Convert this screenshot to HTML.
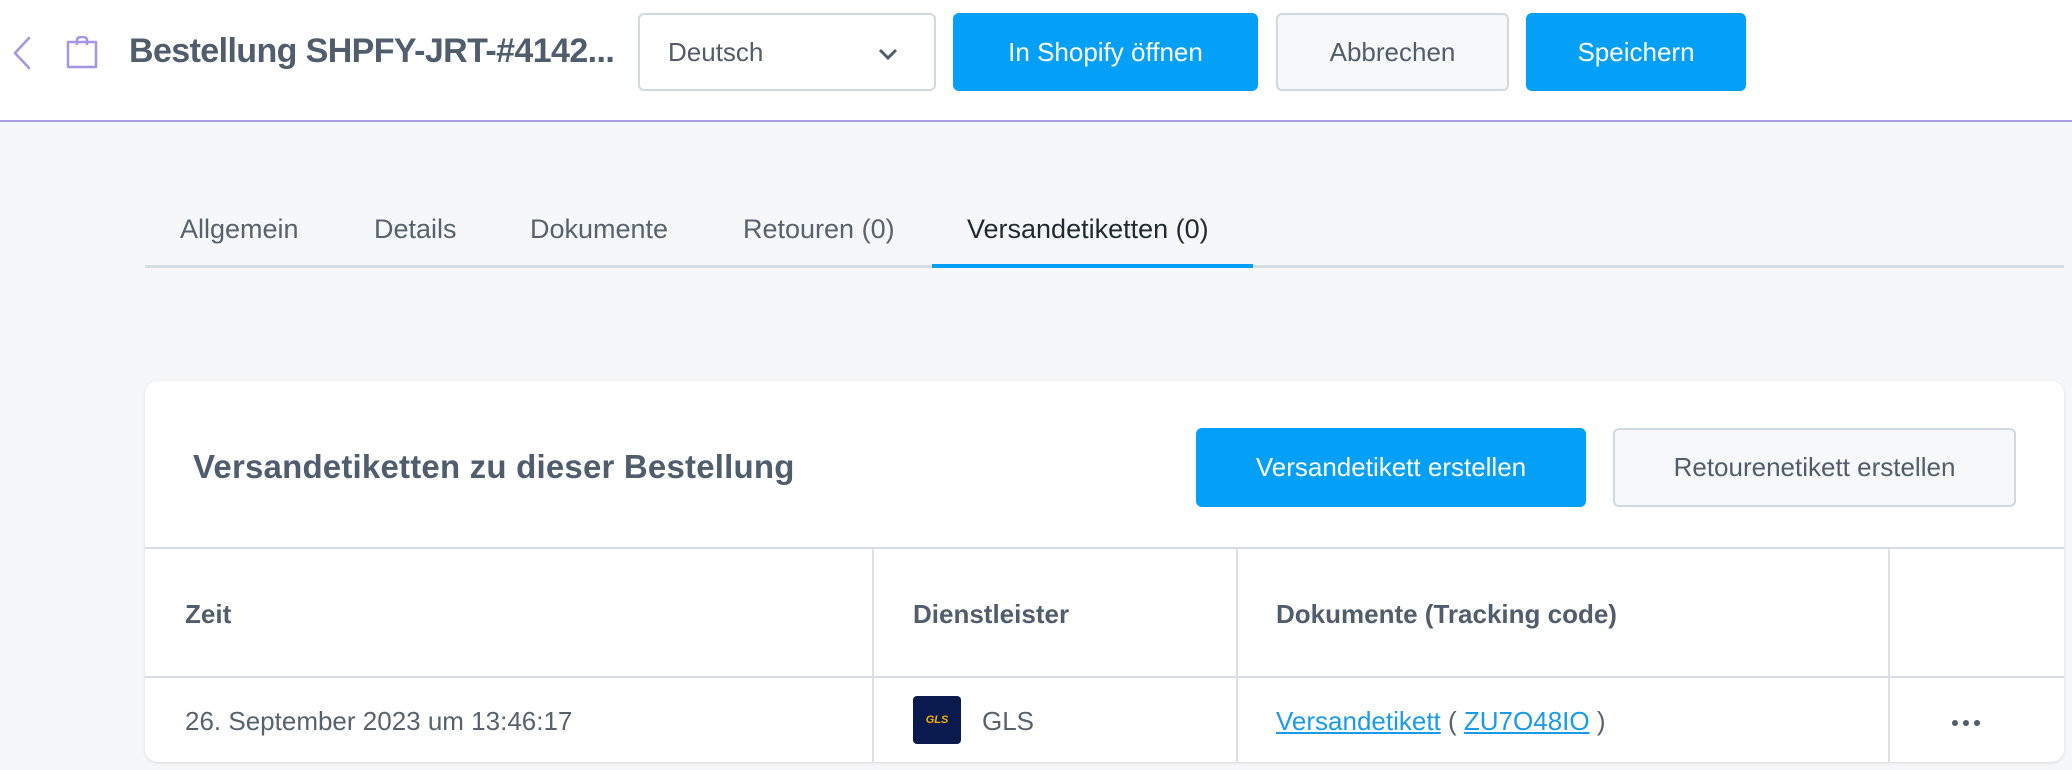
<!DOCTYPE html>
<html><head><meta charset="utf-8"><style>
*{box-sizing:border-box;margin:0;padding:0}
body{width:2072px;height:770px;overflow:hidden;background:#f6f7f9;font-family:"Liberation Sans",Roboto,sans-serif;color:#4f5d6c;position:relative}
.hdr{position:absolute;left:0;top:0;width:2072px;height:122px;background:#fff;border-bottom:2px solid #ad9fe3}
.abs{position:absolute}
.btn{position:absolute;display:flex;align-items:center;justify-content:center;border-radius:6px;font-size:26px}
.blue{background:#04a0f8;color:#fff}
.gray{background:#f7f8fa;border:2px solid #d2d8df;color:#4f5d6c}
.tab{position:absolute;top:214px;font-size:27px;color:#56636f}
.card{position:absolute;left:145px;top:381px;width:1919px;height:381px;background:#fff;border-radius:13px;box-shadow:0 1px 3px rgba(0,0,0,.12);overflow:hidden}
.th{position:absolute;font-weight:bold;font-size:26px;color:#4f5d6c}
.vl{position:absolute;width:2px;background:#dde1e6}
a{color:#1a9be8;text-decoration:underline}
</style></head><body>
<div class="hdr">
<svg class="abs" style="left:12px;top:36px" width="20" height="34" viewBox="0 0 20 34"><path d="M17 2 L3 17 L17 32" fill="none" stroke="#a596e3" stroke-width="2.5" stroke-linecap="round" stroke-linejoin="round"/></svg>
<svg class="abs" style="left:64px;top:36px" width="36" height="34" viewBox="0 0 36 34"><path d="M4 6 H32 V31 H4 Z" fill="none" stroke="#a596e3" stroke-width="2.5" stroke-linejoin="round"/><path d="M13 9 V4 Q13 1 18 1 Q23 1 23 4 V9" fill="none" stroke="#a596e3" stroke-width="2.5"/></svg>
<div class="abs" style="left:129px;top:32px;font-size:34px;letter-spacing:-0.6px;font-weight:bold;color:#4f5d6c">Bestellung SHPFY-JRT-#4142...</div>
<div class="btn" style="left:638px;top:13px;width:298px;height:78px;border:2px solid #d2d8df;justify-content:flex-start;padding-left:28px;color:#4f5d6c">Deutsch
<svg class="abs" style="right:36px;top:33px" width="20" height="13" viewBox="0 0 20 13"><path d="M2 2 L10 10 L18 2" fill="none" stroke="#4f5d6c" stroke-width="3"/></svg></div>
<div class="btn blue" style="left:953px;top:13px;width:305px;height:78px">In Shopify öffnen</div>
<div class="btn gray" style="left:1276px;top:13px;width:233px;height:78px">Abbrechen</div>
<div class="btn blue" style="left:1526px;top:13px;width:220px;height:78px">Speichern</div>
</div>
<div class="tab" style="left:180px">Allgemein</div>
<div class="tab" style="left:374px">Details</div>
<div class="tab" style="left:530px">Dokumente</div>
<div class="tab" style="left:743px">Retouren (0)</div>
<div class="tab" style="left:967px;color:#1f2933">Versandetiketten (0)</div>
<div class="abs" style="left:145px;top:265px;width:1919px;height:3px;background:#d6dde3"></div>
<div class="abs" style="left:932px;top:264px;width:321px;height:4px;background:#04a0f8"></div>
<div class="card">
<div class="abs" style="left:48px;top:67px;font-size:33px;font-weight:bold;color:#4f5d6c;letter-spacing:0.2px">Versandetiketten zu dieser Bestellung</div>
<div class="btn blue" style="left:1051px;top:47px;width:390px;height:79px">Versandetikett erstellen</div>
<div class="btn gray" style="left:1468px;top:47px;width:403px;height:79px">Retourenetikett erstellen</div>
<div class="abs" style="left:0;top:166px;width:1919px;height:2px;background:#d6dde3"></div>
<div class="abs" style="left:0;top:295px;width:1919px;height:2px;background:#d6dde3"></div>
<div class="vl" style="left:727px;top:168px;height:213px"></div>
<div class="vl" style="left:1091px;top:168px;height:213px"></div>
<div class="vl" style="left:1743px;top:168px;height:213px"></div>
<div class="th" style="left:40px;top:218px">Zeit</div>
<div class="th" style="left:768px;top:218px">Dienstleister</div>
<div class="th" style="left:1131px;top:218px">Dokumente (Tracking code)</div>
<div class="abs" style="left:40px;top:325px;font-size:26px;color:#56636f">26. September 2023 um 13:46:17</div>
<div class="abs" style="left:768px;top:315px;width:48px;height:48px;background:#0b1a4e;border-radius:4px;color:#f6b000;font-size:11px;font-weight:bold;font-style:italic;display:flex;align-items:center;justify-content:center">GLS</div>
<div class="abs" style="left:837px;top:325px;font-size:26px;color:#56636f">GLS</div>
<div class="abs" style="left:1131px;top:325px;font-size:26px;color:#56636f"><a>Versandetikett</a> ( <a>ZU7O48IO</a> )</div>
<svg class="abs" style="left:1806px;top:338px" width="30" height="8" viewBox="0 0 30 8"><circle cx="4" cy="4" r="3" fill="#4f5d6c"/><circle cx="15" cy="4" r="3" fill="#4f5d6c"/><circle cx="26" cy="4" r="3" fill="#4f5d6c"/></svg>
</div>
</body></html>
